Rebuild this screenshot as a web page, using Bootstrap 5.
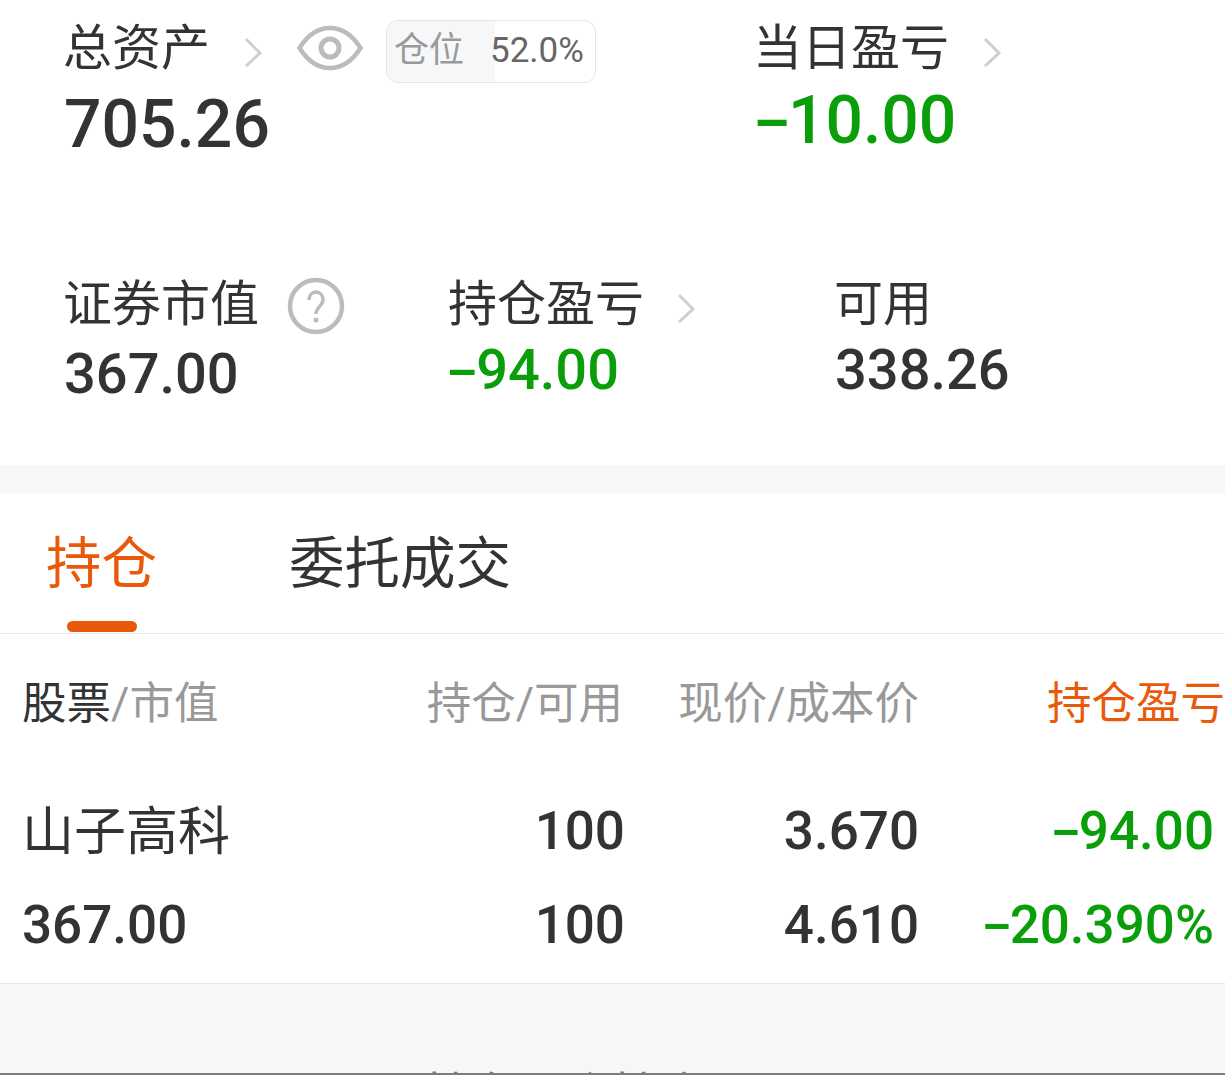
<!DOCTYPE html>
<html lang="zh">
<head>
<meta charset="utf-8">
<title>持仓</title>
<link href="https://cdn.jsdelivr.net/npm/bootstrap@5.3.0/dist/css/bootstrap.min.css" rel="stylesheet">
<style>
html,body{height:1075px;overflow:hidden;}
body{background:#f6f7f9;color:#333;font-family:Roboto,"Noto Sans CJK SC",sans-serif;}
.summary{height:465px;background:#fff;position:relative;}
.top-row{height:234px;padding-left:64px;}
.mid-row{height:231px;padding-left:64px;}
.lbl{font-size:49px;line-height:56px;white-space:nowrap;margin-left:-1px;}
.day .lbl{margin-left:-3px;}
.big{font-size:66px;line-height:72px;font-weight:500;}
.mid{font-size:56px;line-height:62px;font-weight:500;margin-top:5px;}
.up{color:#0a9f0a;}
.mn{display:inline-block;transform:scaleX(1.7);margin:0 .075em 0 .07em;}
.asset{width:692px;padding-top:21px;}
.day{padding-top:21px;}
.asset .big{margin-top:6px;}
.day .big{margin-top:8px;}
.chev{margin-left:34px;}
.chev4{margin-left:33px;}
.chev-day{margin-left:34px;}
.qmark{margin-left:28px;}
.eye{margin-left:35px;}
.pos{margin-left:23px;margin-top:-1px;width:210px;height:63px;border:1px solid #e6e6e8;border-radius:12px;overflow:hidden;font-size:35px;line-height:59px;background:#fff;}
.pos-k{width:108px;padding-left:7px;background:#f6f7f9;color:#999;flex:none;}
.pos-v{color:#666;margin-left:-5px;}
.c1{width:385px;}
.c2{width:386px;}
.mid-row .lbl{height:56px;}
.mid-row .c1,.mid-row .c2{padding-top:43px;}
.mid-row .c1 .mid{margin-top:8px;}
.mid-row .c2 .mid{margin-top:6px;}
.gap-band{height:28px;}
.tabs{height:141px;background:#fff;border-bottom:1px solid #e6e6e6;padding-left:46px;position:relative;}
.tab-item{font-size:55.5px;line-height:64px;padding-top:40px;}
.tab-on{color:#e85a0a;width:243px;position:relative;}
.tab-bar{position:absolute;left:21px;top:128px;width:70px;height:11px;border-radius:6px;background:#e85a0a;}
.holdings{height:350px;background:#fff;border-bottom:1px solid #e6e6e6;padding-left:22px;overflow:hidden;}
.grid-rows{display:grid;grid-template-columns:382px 221px 294px 295px;}
.head{font-size:44.5px;line-height:52px;color:#999;padding-top:44px;height:166px;white-space:nowrap;}
.head .dk{color:#333;}
.head .hcol2{margin-right:2px;}
.head .acc{color:#e85a0a;justify-self:end;margin-right:-11px;}
.cell{font-size:53px;line-height:62px;text-align:right;white-space:nowrap;font-weight:500;}
.row-a{height:94px;}
.name{text-align:left;font-size:52px;font-weight:400;line-height:66px;}
.left-n{text-align:left;}
.empty{height:81px;text-align:center;font-size:47px;line-height:56px;color:#777;padding-top:2px;overflow:hidden;}
.foot-line{height:2px;background:#7d7d7d;position:absolute;left:0;right:0;top:1073px;}
</style>
</head>
<body>
<section class="summary">
  <div class="d-flex top-row">
    <div class="asset">
      <div class="d-flex align-items-start">
        <div class="lbl">总资产</div>
        <svg class="chev mt-3" width="18" height="30" viewBox="0 0 18 30" fill="none" stroke="#cfcfcf" stroke-width="3"><path d="M2 2l14 14L2 29"/></svg>
        <svg class="eye mt-1" width="66" height="46" viewBox="0 0 66 46" fill="none" stroke="#bcbcbc" stroke-width="4.5"><path d="M2.5 23C12 8 22 3 33 3s21 5 30.500 20C54 38 44 43 33 43S12 38 2.500 23z"/><circle cx="33" cy="23" r="9" stroke-width="5"/></svg>
        <div class="pos d-flex"><span class="pos-k">仓位</span><span class="pos-v">52.0%</span></div>
      </div>
      <div class="big">705.26</div>
    </div>
    <div class="day">
      <div class="d-flex align-items-start">
        <div class="lbl">当日盈亏</div>
        <svg class="chev-day mt-3" width="18" height="30" viewBox="0 0 18 30" fill="none" stroke="#cfcfcf" stroke-width="3"><path d="M2 2l14 14L2 29"/></svg>
      </div>
      <div class="big up"><span class="mn">-</span>10.00</div>
    </div>
  </div>
  <div class="d-flex mid-row">
    <div class="c1">
      <div class="d-flex align-items-start">
        <div class="lbl">证券市值</div>
        <svg class="qmark" width="58" height="58" viewBox="0 0 58 58" fill="none" stroke="#bcbcbc" stroke-width="4.500"><circle cx="29" cy="29" r="26"/><path d="M22 23c0-5 3-8 7-8s7 3 7 8c0 6-7 7-7 14" stroke-width="3.500"/><circle cx="29" cy="43" r="2.500" fill="#bcbcbc" stroke="none"/></svg>
      </div>
      <div class="mid">367.00</div>
    </div>
    <div class="c2">
      <div class="d-flex align-items-start">
        <div class="lbl">持仓盈亏</div>
        <svg class="chev4 mt-3" width="18" height="30" viewBox="0 0 18 30" fill="none" stroke="#cfcfcf" stroke-width="3"><path d="M2 2l14 14L2 29"/></svg>
      </div>
      <div class="mid up"><span class="mn">-</span>94.00</div>
    </div>
    <div class="c2">
      <div class="lbl">可用</div>
      <div class="mid">338.26</div>
    </div>
  </div>
</section>
<div class="gap-band"></div>
<nav class="tabs d-flex">
  <div class="tab-item tab-on">持仓<span class="tab-bar"></span></div>
  <div class="tab-item">委托成交</div>
</nav>
<section class="holdings">
  <div class="grid-rows head">
    <div><span class="dk">股票</span>/市值</div>
    <div class="text-end hcol2">持仓/可用</div>
    <div class="text-end">现价/成本价</div>
    <div class="acc">持仓盈亏</div>
  </div>
  <div class="grid-rows row-a">
    <div class="cell name">山子高科</div>
    <div class="cell">100</div>
    <div class="cell">3.670</div>
    <div class="cell up"><span class="mn">-</span>94.00</div>
  </div>
  <div class="grid-rows">
    <div class="cell left-n">367.00</div>
    <div class="cell">100</div>
    <div class="cell">4.610</div>
    <div class="cell up"><span class="mn">-</span>20.390%</div>
  </div>
</section>
<div class="empty"></div>
<div class="empty">持有一个持仓股票</div>
<div class="foot-line"></div>
</body>
</html>
